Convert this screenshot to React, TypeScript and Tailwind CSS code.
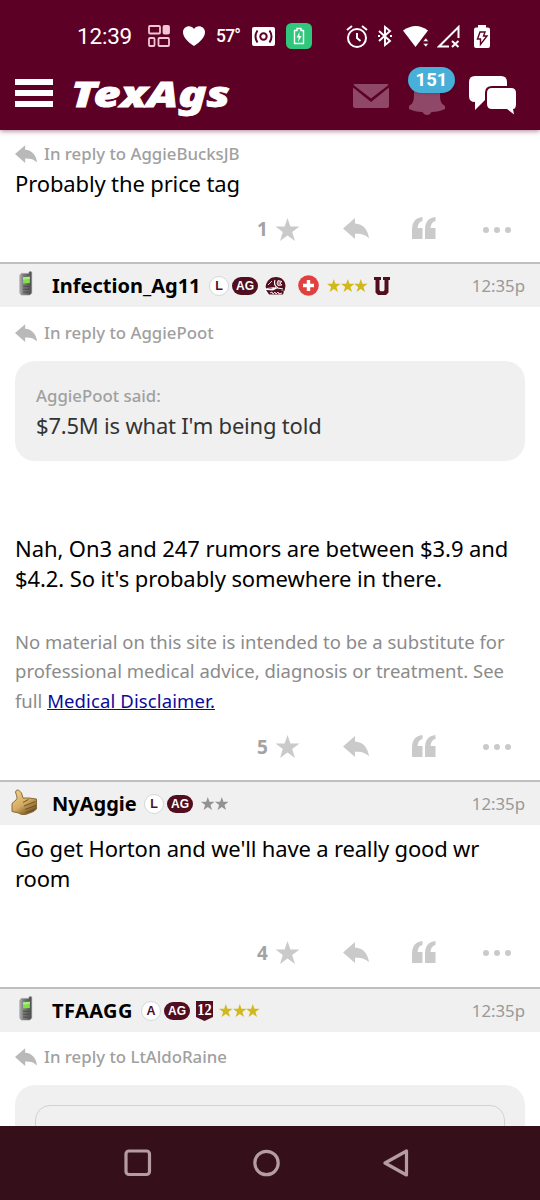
import React from "react";

const MAROON = "#500e1f";

const ReplyIcon = ({ className }: { className: string }) => (
  <svg viewBox="0 0 26 22" className={className} fill="currentColor">
    <path d="M0 10.500 12 0v5.500C20 6 25 11.500 26 20.500c-3.500-4-8-5-14-4.800V21z" />
  </svg>
);

const Star = ({ className }: { className: string }) => (
  <svg viewBox="0 0 24 23" className={className} fill="currentColor">
    <path d="m12 0 2.9 8.6H24l-7.3 5.5 2.8 8.9-7.5-5.4L4.5 23l2.8-8.9L0 8.6h9.1z" />
  </svg>
);

const PhoneIcon = () => (
  <svg viewBox="0 0 16 26" className="mb-1 ml-1 h-[25px] w-4">
    <defs>
      <linearGradient id="phone" x1="0" x2="1">
        <stop offset="0" stopColor="#b0b0b0" />
        <stop offset=".3" stopColor="#7c7c7c" />
        <stop offset="1" stopColor="#4c4c4c" />
      </linearGradient>
    </defs>
    <path d="M11 1.500q0-1 1.500-1t1.500 1V23l-2 2H3l-1.500-2V4.500L3 2.500h8z" fill="url(#phone)" stroke="#999" strokeWidth=".6" />
    <path d="M5 6.500 12 6v6.500L5 13z" fill="#83e04d" />
    <path d="m5 6.500 7-.500v2l-7 1z" fill="#a6f07b" />
    <path d="M5 16h6.500M5 19h6M5 22h5.500" stroke="#444" strokeWidth=".8" />
  </svg>
);

const ThumbIcon = () => (
  <svg viewBox="0 0 26 26" className="mb-1 h-[26px] w-[26px]">
    <defs>
      <linearGradient id="thumb" x1="0" x2=".7" y1="0" y2="1">
        <stop offset="0" stopColor="#f3d48c" />
        <stop offset=".6" stopColor="#d3ac62" />
        <stop offset="1" stopColor="#6f501f" />
      </linearGradient>
    </defs>
    <path
      d="M1 14.500 5 11Q7 9.500 5.500 6.500L4.500 3Q5 .5 7.500 1L10.500 4l1.500 5h6l7.500 1v10l-3 2.500-8 3q-5 .500-7-1.500l-6.500-1.500z"
      fill="url(#thumb)"
      stroke="#80602d"
      strokeWidth=".9"
      strokeLinejoin="round"
    />
    <path d="m12 13.500 5.500-3M13 17l11.500-4.500M14 20.500l11-4M15 23.500l8.500-3" stroke="#725325" strokeWidth="1" fill="none" />
  </svg>
);

const Letter = ({ children }: { children: string }) => (
  <span className="flex h-5 w-5 shrink-0 items-center justify-center rounded-full border border-[#d3dad8] bg-white pt-px font-['Liberation_Sans'] text-[12.500px] font-bold leading-none text-[#500e1f]">
    {children}
  </span>
);

const AgTag = () => (
  <span className="flex h-[18px] w-[26px] shrink-0 items-center justify-center rounded-full bg-[#500e1f] font-['Liberation_Sans'] text-[12px] font-bold leading-none text-white">
    AG
  </span>
);

const HelmetIcon = () => (
  <svg viewBox="0 0 22 20" className="h-5 w-[22px]">
    <path d="M1 12C1 5 6 1 12 1c6 0 9.500 4 9.500 9 0 4-1 7-2.500 9H5l-4-3z" fill="#fff" />
    <path d="M1.500 11C2.500 4 7 1 12 1c6 0 9.500 4 9.500 9l-1 5-5-1-4-3-5 2-4-.5z" fill={MAROON} />
    <path d="m2 14 7 .500 4-2 7 3-1 3H5z" fill={MAROON} />
    <path d="M11 4q-2 5 3 8l5 1" stroke="#fff" fill="none" strokeWidth="1.100" />
    <path d="m14 4.500 4 1-2 1.500 2 2-4 .5-1-2zM4 9l4-4M3 12.500l7-1M6 17l2-1 1 2 2-2 1 2 2-2 1 2 3-1" stroke="#fff" fill="#fff" fillOpacity=".5" strokeWidth=".8" />
  </svg>
);

const PlusIcon = () => (
  <svg viewBox="0 0 21 21" className="h-[21px] w-[21px]">
    <circle cx="10.500" cy="10.500" r="10.300" fill="#e0403e" />
    <path d="M10.500 5v11M5 10.500h11" stroke="#fff" strokeWidth="3.400" />
  </svg>
);

const BlockU = () => (
  <svg viewBox="0 0 16 18" className="h-[18px] w-4">
    <path d="M0 0h7v3H5.500v10l1 1.200h3l1-1.200V3H9V0h7v3h-1.500v12.500L12 18H4l-2.500-2.500V3H0z" fill={MAROON} />
  </svg>
);

const TwelveIcon = () => (
  <svg viewBox="0 0 17 20" className="h-5 w-[17px]">
    <path d="M0 0h17v16l-8.500 4L0 16z" fill={MAROON} />
    <text x="8.500" y="13.500" textAnchor="middle" textLength="14.500" lengthAdjust="spacingAndGlyphs" fill="#fff" fontFamily="Liberation Serif" fontWeight="700" fontSize="17">
      12
    </text>
  </svg>
);

type AuthorBarProps = {
  icon: React.ReactNode;
  name: string;
  nameWidth: string;
  children: React.ReactNode;
};

const AuthorBar = ({ icon, name, nameWidth, children }: AuthorBarProps) => (
  <div className="flex h-[45px] items-center border-t-2 border-[#bfbfbf] bg-[#f0f0f0] pr-[15px]">
    <div className="flex w-[52px] shrink-0 justify-center pr-1">{icon}</div>
    <span className={`${nameWidth} text-[20px] font-bold text-black`}>{name}</span>
    <div className="flex items-center">{children}</div>
    <span className="ml-auto text-[16.800px] text-[#999]">12:35p</span>
  </div>
);

const ReplyTo = ({ name }: { name: string }) => (
  <div className="flex h-[30px] items-center px-[15px] text-[16.800px] font-medium text-[#a0a0a0]">
    <ReplyIcon className="mr-[7px] h-[19px] w-[22px] text-[#b9b9b9]" />
    In reply to {name}
  </div>
);

const Actions = ({ count }: { count: number }) => (
  <div className="flex h-[30px] items-center pl-[257px] text-[#cacaca]">
    <span className="w-[12px] pt-px text-[19px] font-bold text-[#a3a3a3]">{count}</span>
    <Star className="mb-px ml-[6px] h-[23px] w-[25px]" />
    <ReplyIcon className="mb-px ml-[43px] h-[22px] w-[26px]" />
    <svg viewBox="0 0 24 22" className="mb-[3px] ml-[43px] h-[22px] w-6" fill="currentColor">
      <path d="M10.500 0v4Q6 5 5.500 11h5v11H0V13Q0 1 10.500 0zM23.500 0v4Q19 5 18.500 11h5v11H13V13Q13 1 23.500 0z" />
    </svg>
    <svg viewBox="0 0 28 6" className="ml-[47px] h-[6px] w-7" fill="currentColor">
      <circle cx="3" cy="3" r="3" />
      <circle cx="14" cy="3" r="3" />
      <circle cx="25" cy="3" r="3" />
    </svg>
  </div>
);

const StatusBar = () => (
  <div className="flex h-[72px] items-center pl-[77px]">
    <span className="w-[71px] pt-px font-[Roboto] text-[22.500px] tracking-[-0.2px] text-white">12:39</span>
    <svg viewBox="0 0 22 22" className="h-[22px] w-[22px]" fill="none" stroke="#f3c5d3" strokeWidth="1.800">
      <rect x="1" y="1" width="11" height="7.500" rx="1" />
      <rect x="15.500" y="1" width="5.500" height="7.500" rx="1" fill="#f3c5d3" />
      <rect x="1" y="13" width="5.500" height="8" rx="1" />
      <rect x="10.500" y="13" width="10.500" height="8" rx="1" />
    </svg>
    <svg viewBox="0 0 22 20" className="ml-[13px] h-5 w-[22px]" fill="#fff">
      <path d="M11 20C5 16 0 11.500 0 6c0-6 8-8 11-3 3-5 11-3 11 3 0 5.500-5 10-11 14z" />
    </svg>
    <span className="ml-[11px] w-[36px] font-[Roboto] text-[17.500px] font-medium tracking-[-0.8px] text-white">57°</span>
    <svg viewBox="0 0 23 19" className="h-[19px] w-[23px]">
      <rect width="23" height="19" rx="2" fill="#fff" />
      <g fill="none" stroke="#5c0025" strokeWidth="2">
        <circle cx="11.500" cy="9.500" r="3.200" />
        <path d="M5.500 3.500q-4 6 0 12M17.500 3.500q4 6 0 12" />
      </g>
    </svg>
    <svg viewBox="0 0 26 26" className="ml-[11px] h-[26px] w-[26px]">
      <rect width="26" height="26" rx="5.500" fill="#2fc77b" />
      <path d="M11 5.500h4v2h2.500v13h-9v-13H11z" fill="none" stroke="#fff" strokeWidth="1.400" />
      <path d="m13.500 9-3 5.500h2.200L12 19l3.500-6h-2.200z" fill="#fff" />
    </svg>
    <svg viewBox="0 0 22 23" className="ml-[34px] h-[23px] w-[22px]" fill="none" stroke="#fff" strokeWidth="2">
      <circle cx="11" cy="13" r="9" />
      <path d="M11 8v5l3.500 3M1 5l5-4M21 5l-5-4" />
    </svg>
    <svg viewBox="0 0 14 22" className="ml-[10px] h-[22px] w-[14px]" fill="none" stroke="#fff" strokeWidth="1.900">
      <path d="m1 6 11 10-5 4V2l5 4L1 16" />
      <path d="M0 11h2M12 11h2" />
    </svg>
    <svg viewBox="0 0 26 21" className="ml-[11px] h-[21px] w-[26px]" fill="#fff">
      <path d="M0 4.500q13-9 25 0L12.500 21z" />
      <path d="m20 15.500 2.800-3.500 2.800 3.500zM20 17.500l2.800 3.500 2.800-3.500z" stroke="#5c0025" strokeWidth=".5" />
    </svg>
    <svg viewBox="0 0 23 23" className="ml-[8px] h-[23px] w-[23px]" fill="none" stroke="#fff" strokeWidth="2">
      <path d="M12 21.500H2L21.500 2v11M15 16l6.500 6M21.500 16 15 22" />
    </svg>
    <svg viewBox="0 0 16 23" className="ml-[14px] h-[23px] w-4">
      <path d="M4 0h8v2.500h2q2 0 2 2V21q0 2-2 2H2q-2 0-2-2V4.500q0-2 2-2h2z" fill="#fff" />
      <path d="M6 7h5l-1.500 4H13l-6.500 8.500V14H3.500z" fill="none" stroke="#5c0025" strokeWidth="1.400" />
    </svg>
  </div>
);

const SiteHeader = () => (
  <div className="flex h-[58px] items-start pl-[15px] text-white">
    <div className="mt-[7px] flex w-[38px] flex-col gap-[5px]">
      <span className="h-[6px] bg-white" />
      <span className="h-[6px] bg-white" />
      <span className="h-[6px] bg-white" />
    </div>
    <svg viewBox="0 -10 164 58" className="-mt-[10px] ml-[17px] h-[58px] w-[164px]">
      <text x="1" y="35" textLength="159" lengthAdjust="spacingAndGlyphs" fill="#fff" stroke="#fff" strokeWidth=".8" fontFamily="Noto Sans" fontWeight="900" fontStyle="italic" fontSize="36">
        TexAgs
      </text>
    </svg>
    <svg viewBox="0 0 36 24" className="ml-[119px] mt-3 h-6 w-9" fill="#8f4867">
      <path d="M2 0h32q1 0 1.500 1L18 14.500.500 1Q1 0 2 0zM0 3.500l18 14.500L36 3.500V22q0 2-2 2H2q-2 0-2-2z" />
    </svg>
    <div className="relative ml-5 mt-[5px]">
      <svg viewBox="0 0 36 38" className="h-[38px] w-9" fill="#8f4867">
        <path d="M18 0c9 0 13 6 13 14 0 9 0 12 5 15v3q-6 3-13.500 3-1.500 3-4.500 3t-4.500-3Q6 35 0 32v-3c5-3 5-6 5-15C5 6 9 0 18 0z" />
      </svg>
      <span className="absolute -left-px -top-[10px] flex h-[26px] w-[47px] items-center justify-center rounded-full bg-[#48b0d8] pt-px font-[Roboto] text-[18.500px] font-bold tracking-[0.100px] shadow-sm">
        151
      </span>
    </div>
    <svg viewBox="0 0 48 40" className="ml-6 mt-1 h-10 w-12" fill="#fff">
      <path d="M6 0h26q6 0 6 6v4H23q-7 0-7 7v7l-10 10v-8Q0 26 0 20V6q0-6 6-6z" />
      <path d="M23 12h19q5 0 5 5v11q0 5-3 5l1 5.500-7-5.500H23q-5 0-5-5V17q0-5 5-5z" />
    </svg>
  </div>
);

const NavBar = () => (
  <div className="flex h-[74px] shrink-0 items-center bg-[#35101a] pl-[124px]">
    <svg viewBox="0 0 28 28" className="h-7 w-7" fill="none" stroke="#b59ca3" strokeWidth="3.200">
      <rect x="2" y="2" width="23.500" height="23.500" rx="3" />
    </svg>
    <svg viewBox="0 0 28 28" className="ml-[101px] h-7 w-7" fill="none" stroke="#b59ca3" strokeWidth="3.200">
      <circle cx="13.500" cy="14" r="11.700" />
    </svg>
    <svg viewBox="0 0 28 28" className="ml-[102px] h-7 w-7" fill="none" stroke="#b59ca3" strokeWidth="3.200" strokeLinejoin="round">
      <path d="M2 14 23.500 2v24z" />
    </svg>
  </div>
);

const Rating = ({ count, className }: { count: number; className: string }) => (
  <div className={className}>
    {Array.from({ length: count }, (_, i) => (
      <Star key={i} className="h-[13px] w-[13.600px]" />
    ))}
  </div>
);

const App = () => {
  return (
    <div className="flex h-[1200px] w-[540px] flex-col overflow-hidden bg-white font-['Noto_Sans',sans-serif]">
      <header className="z-10 h-[130px] shrink-0 bg-[#5c0025] shadow-[0_1px_5px_rgba(92,0,37,0.500)]">
        <StatusBar />
        <SiteHeader />
      </header>

      <main className="min-h-0 flex-1 overflow-hidden text-[22px] leading-[29.500px] text-black">
        {/* Post 1 */}
        <section className="h-[132px] pt-[9px]">
          <ReplyTo name="AggieBucksJB" />
          <p className="px-[15px] tracking-[-0.130px]">Probably the price tag</p>
          <div className="mt-[16px]">
            <Actions count={1} />
          </div>
        </section>

        {/* Post 2 */}
        <section className="h-[518px]">
          <AuthorBar icon={<PhoneIcon />} name="Infection_Ag11" nameWidth="w-[157px]">
            <Letter>L</Letter>
            <div className="ml-[3px]"><AgTag /></div>
            <div className="ml-[6px]"><HelmetIcon /></div>
            <div className="ml-[12px]"><PlusIcon /></div>
            <Rating count={3} className="ml-[8px] flex text-[#d2b91b]" />
            <div className="ml-[6px]"><BlockU /></div>
          </AuthorBar>
          <div className="pt-[11px]">
            <ReplyTo name="AggiePoot" />
          </div>
          <blockquote className="mx-[15px] mt-[13px] h-[100px] rounded-[20px] bg-[#f0f0f0] px-[21px] pt-5">
            <p className="text-[16.800px] font-medium text-[#a0a0a0]">AggiePoot said:</p>
            <p className="tracking-[-0.200px] text-[#333]">$7.5M is what I'm being told</p>
          </blockquote>
          <p className="mt-[73px] whitespace-nowrap px-[15px] tracking-[-0.090px]">
            Nah, On3 and 247 rumors are between $3.9 and
            <br />
            $4.2. So it's probably somewhere in there.
          </p>
          <p className="mt-[33.500px] whitespace-nowrap px-[15px] text-[18.500px] text-[#8b8b8b]">
            No material on this site is intended to be a substitute for
            <br />
            professional medical advice, diagnosis or treatment. See
            <br />
            full <a className="tracking-[0.120px] text-[#0b0b9a] underline">Medical Disclaimer.</a>
          </p>
          <div className="mt-[17px]">
            <Actions count={5} />
          </div>
        </section>

        {/* Post 3 */}
        <section className="h-[207px]">
          <AuthorBar icon={<ThumbIcon />} name="NyAggie" nameWidth="w-[92px]">
            <Letter>L</Letter>
            <div className="ml-[3px]"><AgTag /></div>
            <Rating count={2} className="ml-[8px] flex text-[#929292]" />
          </AuthorBar>
          <p className="mt-[9px] whitespace-nowrap px-[15px] tracking-[-0.160px]">
            Go get Horton and we'll have a really good wr
            <br />
            room
          </p>
          <div className="mt-[45px]">
            <Actions count={4} />
          </div>
        </section>

        {/* Post 4 */}
        <section>
          <AuthorBar icon={<PhoneIcon />} name="TFAAGG" nameWidth="w-[89px] tracking-[0.400px]">
            <Letter>A</Letter>
            <div className="ml-[3px]"><AgTag /></div>
            <div className="ml-[6px]"><TwelveIcon /></div>
            <Rating count={3} className="ml-[6px] flex text-[#d2b91b]" />
          </AuthorBar>
          <div className="pt-[10px]">
            <ReplyTo name="LtAldoRaine" />
          </div>
          <div className="mx-[15px] mt-[13px] h-[100px] rounded-[20px] bg-[#f0f0f0] px-5 pt-[20px]">
            <div className="h-[80px] rounded-[15px] border border-[#d2d2d2]" />
          </div>
        </section>
      </main>

      <NavBar />
    </div>
  );
};

export default App;
